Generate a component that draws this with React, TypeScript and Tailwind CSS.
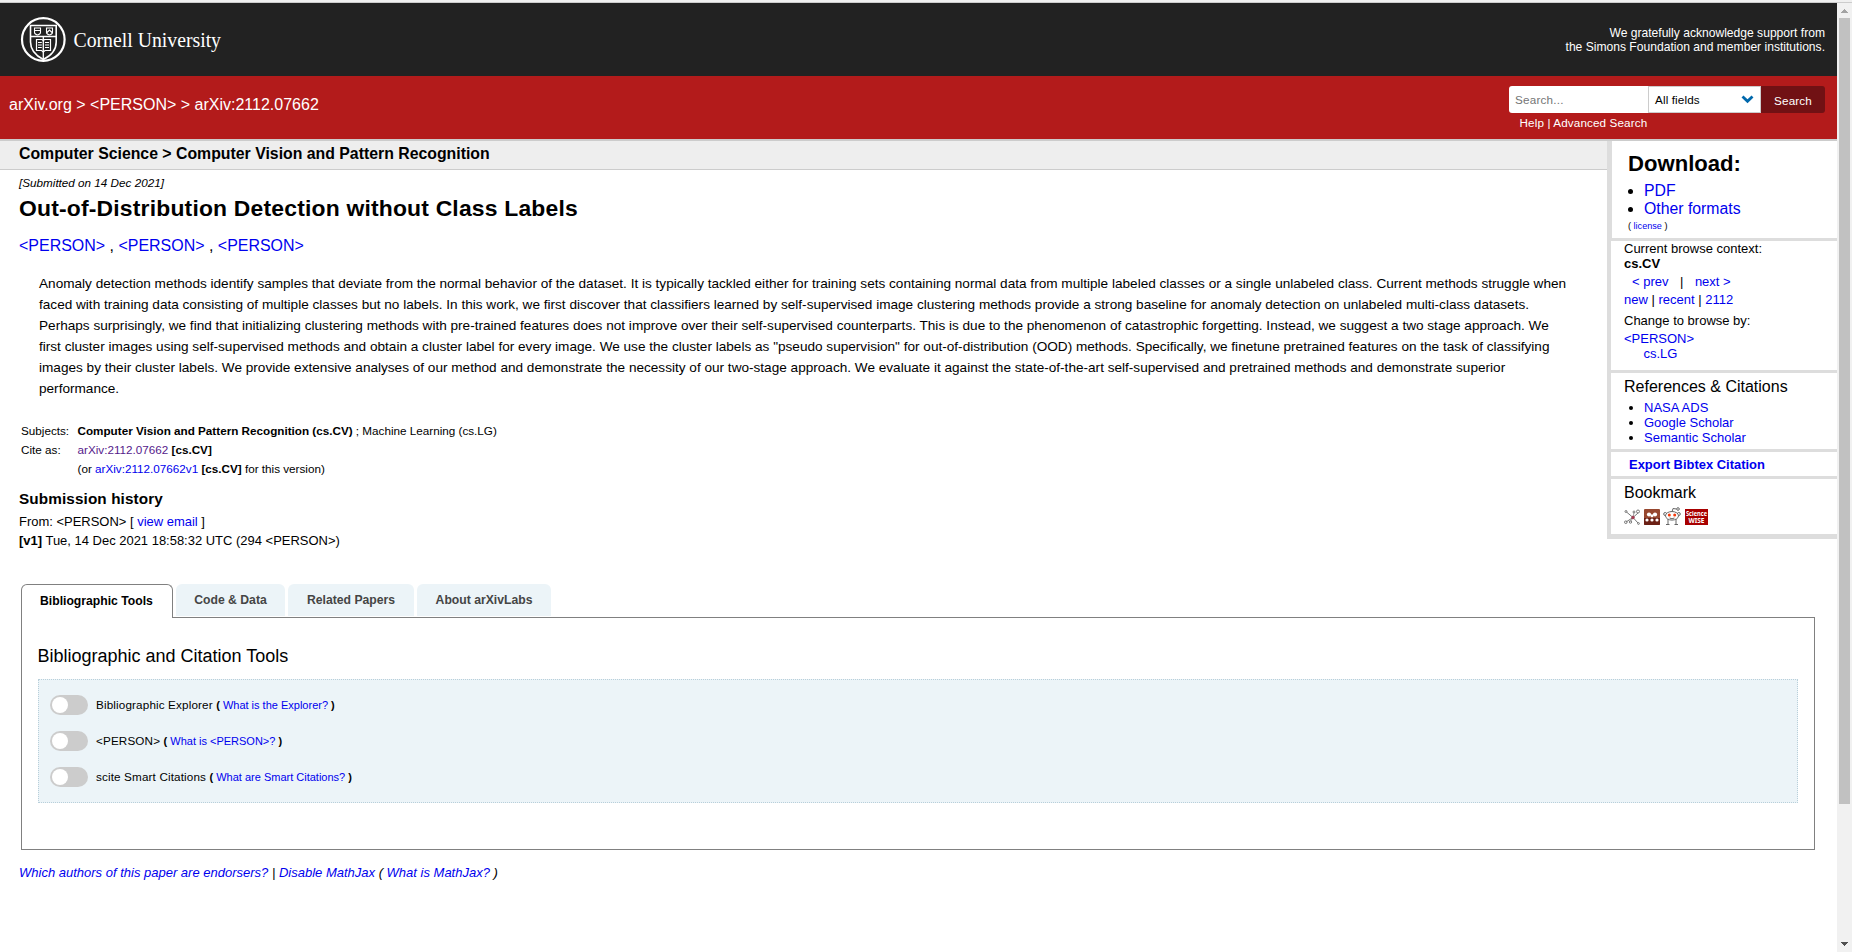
import React from "react";

const L = "text-[#0000ee]";

function A({ children, className = L }: { children: React.ReactNode; className?: string }) {
  return <a className={className}>{children}</a>;
}

function CornellLogo() {
  return (
    <svg width="212" height="48" viewBox="0 0 212 48" fill="none" className="-mt-px overflow-visible">
      <circle cx="23.3" cy="24.5" r="21.3" stroke="#fff" strokeWidth="2.2" />
      <path d="M10.5 10.500H36.200V27C36.200 35.500 31.500 40.500 23.300 44.500C15.500 40.500 10.500 35.500 10.500 27Z" stroke="#fff" strokeWidth="1.600" />
      <path d="M10.500 21.500H36.200M23.300 22V44" stroke="#fff" strokeWidth="1.300" />
      <path d="M14.500 13H20.500V17.500C20.500 18.600 19 19.500 17.500 20C16 19.500 14.500 18.600 14.500 17.500ZM26.500 13H32.500V17.500C32.500 18.600 31 19.500 29.500 20C28 19.500 26.500 18.600 26.500 17.500ZM14.500 15.500H20.500M27 17.500L29.500 15L32 17.500" stroke="#fff" strokeWidth="1.100" />
      <path d="M16.500 24.500H22L23.300 25.500L24.600 24.500H30.500V35.500H25L23.300 37L21.600 35.500H16.500Z" stroke="#fff" strokeWidth="1.200" />
      <path d="M18 27.500H21.800M18 30H21.800M18 32.500H21.800M25 27.500H29M25 30H29M25 32.500H29" stroke="#fff" strokeWidth="1.100" />
      <text x="53.500" y="31.500" fill="#fff" fontSize="20" fontFamily="'Liberation Serif', serif" textLength="147.500" lengthAdjust="spacingAndGlyphs">Cornell University</text>
    </svg>
  );
}

function Header() {
  return (
    <div className="flex h-[73px] shrink-0 items-center justify-between bg-[#222] pr-3 pl-5 text-white">
      <CornellLogo />
      <div className="text-right text-[12.1px] leading-[14px]">
        We gratefully acknowledge support from
        <br />
        the Simons Foundation and member institutions.
      </div>
    </div>
  );
}

function SearchBar() {
  return (
    <div className="flex h-[63px] shrink-0 justify-between bg-[#b31b1b] pr-3 pl-[9px] text-white">
      <div className="pt-[20px] text-[16px] leading-[18px]">arXiv.org &gt; &lt;PERSON&gt; &gt; arXiv:2112.07662</div>
      <div className="w-[316px] pt-[10px] text-[11.7px] tracking-[0.12px]">
        <div className="flex h-[27px]">
          <div className="w-[139px] rounded-l-[3px] bg-white pl-1.5 leading-[28px] tracking-[0.2px] text-[#757575]">Search...</div>
          <div className="flex w-[113px] items-center justify-between border border-[#ccc] bg-white pr-[6px] pl-1.5 text-black">
            <span className="pt-px">All fields</span>
            <svg width="13" height="9" viewBox="0 0 13 9" fill="none">
              <path d="M1.500 1.500L6.500 6.300L11.500 1.500" stroke="#0068ac" strokeWidth="2.800" />
            </svg>
          </div>
          <div className="w-[64px] rounded-r-[3px] bg-[#711114] text-center leading-[30px]">Search</div>
        </div>
        <div className="pt-[3px] pl-[10.500px] leading-[14px]">Help | Advanced Search</div>
      </div>
    </div>
  );
}

function ScrollBar() {
  return (
    <div className="flex w-[15px] shrink-0 flex-col items-center bg-[#f1f1f1]">
      <svg width="15" height="15" viewBox="0 0 15 15" shapeRendering="crispEdges"><path d="M4 10L7.500 6L11 10Z" fill="#a3a3a3" /></svg>
      <div className="h-[786px] w-[11px] bg-[#c1c1c1]" />
      <div className="grow" />
      <svg width="15" height="15" viewBox="0 0 15 15" shapeRendering="crispEdges"><path d="M4 5L7.500 9L11 5Z" fill="#505050" /></svg>
    </div>
  );
}

function BookmarkIcons() {
  return (
    <div className="mt-[5px] flex h-[18px] items-end">
      <svg width="16" height="16" viewBox="0 0 16 16" fill="none" stroke="#777" strokeWidth="1">
        <path d="M9 8.500L2.500 3M9 8.500L2 13M9 8.500L14 4M9 8.500L14 14" />
        <path d="M9 8.500L10 3.500M9 8.500L6.500 12.500" strokeWidth="0.700" />
        <circle cx="2" cy="2.500" r="1" /><circle cx="1.800" cy="13.200" r="1.300" /><circle cx="14" cy="2.500" r="1.500" /><circle cx="10" cy="3" r="1" /><circle cx="14.500" cy="14.500" r="0.900" /><circle cx="6.500" cy="13" r="1.200" />
        <circle cx="9" cy="8.500" r="1.300" fill="#a33a50" stroke="#a33a50" />
      </svg>
      <svg className="ml-1" width="16" height="16" viewBox="0 0 16 16">
        <rect width="16" height="16" rx="1" fill="#96472f" />
        <path d="M0 9H16V15A1 1 0 0 1 15 16H1A1 1 0 0 1 0 15Z" fill="#6b2015" />
        <circle cx="5" cy="5.500" r="2.100" fill="#fff" /><circle cx="11" cy="5.500" r="2.100" fill="#fff" />
        <circle cx="8" cy="6.800" r="1.500" fill="#fff" />
        <circle cx="3" cy="11" r="1.600" fill="#fff" /><circle cx="13" cy="11" r="1.600" fill="#fff" /><circle cx="8" cy="11" r="1.600" fill="#fff" />
      </svg>
      <svg className="ml-[3px]" width="18" height="18" viewBox="0 0 18 18" fill="none" stroke="#666" strokeWidth="1">
        <path d="M9 5L10 1.500L13.500 2" /><circle cx="15" cy="2" r="1.300" />
        <circle cx="2.200" cy="7" r="1.500" fill="#fff" /><circle cx="15.800" cy="7" r="1.500" fill="#fff" />
        <path d="M5 12V17M13 12V17M3 17.500H6.500M11.500 17.500H15" />
        <ellipse cx="9" cy="8.800" rx="6.500" ry="4.300" fill="#fff" />
        <path d="M6.500 11Q9 12.500 11.500 11" />
        <circle cx="6.300" cy="8" r="1.500" fill="#f43b0d" stroke="none" /><circle cx="11.700" cy="8" r="1.500" fill="#f43b0d" stroke="none" />
      </svg>
      <svg className="ml-1 overflow-visible" width="23" height="16" viewBox="0 0 23 16">
        <rect width="23" height="16" fill="#a80000" />
        <text x="1" y="7" fontSize="7" fontWeight="bold" fill="#fff" fontFamily="'Noto Sans', sans-serif" textLength="21" lengthAdjust="spacingAndGlyphs">Science</text>
        <text x="3.500" y="14" fontSize="7" fontWeight="bold" fill="#fff" fontFamily="'Noto Sans', sans-serif" textLength="16" lengthAdjust="spacingAndGlyphs">WISE</text>
      </svg>
    </div>
  );
}

function Sidebar() {
  return (
    <aside className="flex h-[398px] w-[230px] shrink-0 flex-col gap-[3px] border-b-[5px] border-l-4 border-[#ddd] bg-[#ddd] text-[13px] leading-[15px]">
      <section className="ml-px h-[97px] bg-white pl-[16px]">
        <h2 className="pt-[10px] text-[22.1px] leading-[26px] font-bold">Download:</h2>
        <ul className="list-disc pt-[5px] pl-[16px] text-[15.800px] leading-[18px]">
          <li><A>PDF</A></li>
          <li><A>Other formats</A></li>
        </ul>
        <div className="pt-[3px] text-[9.1px] leading-[11px]">( <A>license</A> )</div>
      </section>
      <section className="h-[129px] bg-white pl-[13px]">
        <div>Current browse context:</div>
        <div className="font-bold">cs.CV</div>
        <div className="pt-[3px] pl-2 whitespace-pre"><A>&lt; prev</A><span className="px-[11.500px]">|</span><A>next &gt;</A></div>
        <div className="pt-[3px]"><A>new</A> | <A>recent</A> | <A>2112</A></div>
        <div className="pt-[6px]">Change to browse by:</div>
        <div className="pt-[3px]"><A>&lt;PERSON&gt;</A></div>
        <div className="pl-[19.500px]"><A>cs.LG</A></div>
      </section>
      <section className="h-[76px] bg-white pl-[13px]">
        <h3 className="pt-[5px] text-[16px] leading-[18px]">References &amp; Citations</h3>
        <ul className="list-disc pt-[4px] pl-[20px]">
          <li><A>NASA ADS</A></li>
          <li><A>Google Scholar</A></li>
          <li><A>Semantic Scholar</A></li>
        </ul>
      </section>
      <section className="h-[24px] bg-white pt-[5px] pl-[18px] text-[12.950px] font-bold"><A>Export Bibtex Citation</A></section>
      <section className="h-[55px] bg-white pl-[13px]">
        <h3 className="pt-[5px] text-[16px] leading-[18px]">Bookmark</h3>
        <BookmarkIcons />
      </section>
    </aside>
  );
}

function Article() {
  return (
    <main className="min-w-0 grow">
      <div className="h-[29px] border-b border-[#ccc] bg-[#eee] pl-[19px] text-[15.830px] leading-[25px] font-bold">
        Computer Science &gt; Computer Vision and Pattern Recognition
      </div>
      <div className="pl-[19px]">
        <div className="pt-[6px] text-[11.7px] leading-[14px] italic">[Submitted on 14 Dec 2021]</div>
        <h1 className="pt-[5px] text-[22.900px] leading-[27px] font-bold tracking-[0.190px]">Out-of-Distribution Detection without Class Labels</h1>
        <div className="pt-[14px] text-[15.970px] leading-[20px]"><A>&lt;PERSON&gt;</A> , <A>&lt;PERSON&gt;</A> , <A>&lt;PERSON&gt;</A></div>
        <p className="pt-[17px] pl-5 text-[13.6px] leading-[21px] whitespace-pre">
          Anomaly detection methods identify samples that deviate from the normal behavior of the dataset. It is typically tackled either for training sets containing normal data from multiple labeled classes or a single unlabeled class. Current methods struggle when<br />
          faced with training data consisting of multiple classes but no labels. In this work, we first discover that classifiers learned by self-supervised image clustering methods provide a strong baseline for anomaly detection on unlabeled multi-class datasets.<br />
          Perhaps surprisingly, we find that initializing clustering methods with pre-trained features does not improve over their self-supervised counterparts. This is due to the phenomenon of catastrophic forgetting. Instead, we suggest a two stage approach. We<br />
          first cluster images using self-supervised methods and obtain a cluster label for every image. We use the cluster labels as "pseudo supervision" for out-of-distribution (OOD) methods. Specifically, we finetune pretrained features on the task of classifying<br />
          images by their cluster labels. We provide extensive analyses of our method and demonstrate the necessity of our two-stage approach. We evaluate it against the state-of-the-art self-supervised and pretrained methods and demonstrate superior<br />
          performance.
        </p>
      </div>
      <div className="grid grid-cols-[56.500px_1fr] pt-[22px] pl-[21px] text-[11.7px] leading-[19px]">
        <span>Subjects:</span>
        <span><b>Computer Vision and Pattern Recognition (cs.CV)</b> ; Machine Learning (cs.LG)</span>
        <span>Cite as:</span>
        <span><A className="text-[#551a8b]">arXiv:2112.07662</A> <b>[cs.CV]</b></span>
        <span />
        <span>(or <A>arXiv:2112.07662v1</A> <b>[cs.CV]</b> for this version)</span>
      </div>
      <div className="pl-[19px] text-[12.970px] leading-[19px]">
        <h2 className="pt-[12px] text-[15.300px] leading-[18px] font-bold tracking-[0.110px]">Submission history</h2>
        <div className="pt-[4px]">From: &lt;PERSON&gt; [ <A>view email</A> ]</div>
        <div><b>[v1]</b> Tue, 14 Dec 2021 18:58:32 UTC (294 &lt;PERSON&gt;)</div>
      </div>
    </main>
  );
}

const tools = [
  ["Bibliographic Explorer", "What is the Explorer?"],
  ["<PERSON>", "What is <PERSON>?"],
  ["scite Smart Citations", "What are Smart Citations?"],
];

function Labs() {
  return (
    <div className="ml-[21px] w-[1794px] pt-[33px]">
      <div className="flex h-[34px] items-start text-[12.2px] font-bold text-[#454545]">
        <div className="z-10 -mb-px h-[34px] w-[152px] rounded-t-[6px] border border-b-0 border-[#808080] bg-white pl-[18px] leading-[32px] text-black">Bibliographic Tools</div>
        <div className="ml-[3px] h-[32px] w-[109px] rounded-t-[6px] bg-[#ecf4f8] text-center leading-[32px]">Code &amp; Data</div>
        <div className="ml-[3px] h-[32px] w-[126px] rounded-t-[6px] bg-[#ecf4f8] text-center leading-[32px]">Related Papers</div>
        <div className="ml-[3px] h-[32px] w-[134px] rounded-t-[6px] bg-[#ecf4f8] text-center leading-[32px]">About arXivLabs</div>
      </div>
      <div className="-mt-px h-[233px] border border-[#808080] px-4">
        <h2 className="-ml-[0.500px] pt-[27px] text-[18px] leading-[22px]">Bibliographic and Citation Tools</h2>
        <div className="mt-[12px] flex h-[124px] flex-col gap-4 border border-dotted border-[#b8cfda] bg-[#ecf4f8] pt-[15px] pl-[11px] text-[11.7px] leading-5">
          {tools.map(([name, q]) => (
            <div key={name} className="flex h-5 items-center">
              <span className="flex h-5 w-[38px] items-center rounded-full bg-[#ccc] pl-0.5">
                <span className="size-4 rounded-full bg-white" />
              </span>
              <span className="ml-2 whitespace-pre tracking-[0.140px]">{name} </span>
              <span className="text-[11px] whitespace-pre"><b>( </b><A>{q}</A><b> )</b></span>
            </div>
          ))}
        </div>
      </div>
    </div>
  );
}

export default function App() {
  return (
    <div className="flex h-[952px] w-[1852px] flex-col overflow-hidden bg-white font-['Liberation_Sans',Arial,sans-serif] text-black">
      <div className="h-[3px] shrink-0 border-b border-[#ccc] bg-[#f0f0f0]" />
      <div className="flex min-h-0 grow">
        <div className="min-w-0 grow">
          <Header />
          <SearchBar />
          <div className="flex h-[400px] border-t-2 border-[#ccc]">
            <Article />
            <Sidebar />
          </div>
          <div className="pt-[12px]">
            <Labs />
          </div>
          <div className="pt-[14px] pl-[19px] text-[13px] leading-[18px] italic">
            <A>Which authors of this paper are endorsers?</A> | <A>Disable MathJax</A> ( <A>What is MathJax?</A> )
          </div>
        </div>
        <ScrollBar />
      </div>
    </div>
  );
}
